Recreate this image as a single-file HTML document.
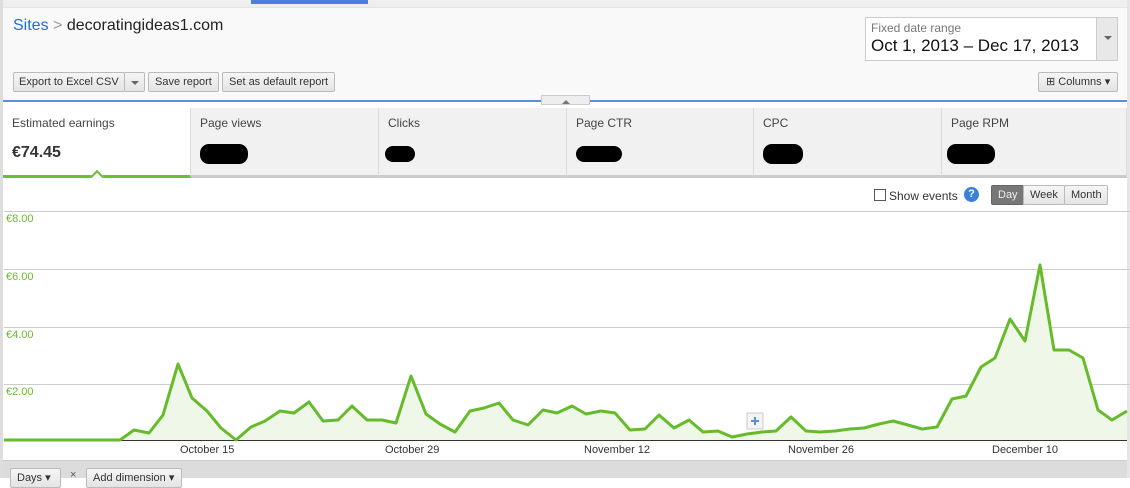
<!DOCTYPE html>
<html><head><style>
*{margin:0;padding:0;box-sizing:border-box}
body{width:1130px;height:478px;overflow:hidden;background:#fff;font-family:"Liberation Sans",Arial,sans-serif;position:relative;color:#222}
.abs{position:absolute}
.btn{position:absolute;height:20px;border:1px solid #bbb;border-radius:2px;background:linear-gradient(#f6f6f6,#e4e4e4);font-size:11px;line-height:18px;padding:0 6px;color:#333;white-space:nowrap;overflow:hidden}
.tab{position:absolute;top:108px;height:70px;width:187px;background:#f1f1f1;border-right:1px solid #ddd;border-bottom:3px solid #ccc}
.tab .t{position:absolute;left:9px;top:8px;font-size:12px;color:#444}
.blob{position:absolute;top:36px;left:9px;height:20px;background:#000;border-radius:9px}
.gl{position:absolute;left:4px;right:0;height:1px;background:#ccc}
.yl{position:absolute;left:6px;font-size:11px;color:#6aba2c}
.xl{position:absolute;top:444px;font-size:11px;color:#333}
</style></head><body>
<div class="abs" style="left:0;top:0;width:1130px;height:7px;background:#efefef"></div>
<div class="abs" style="left:251px;top:0;width:117px;height:4px;background:#4a7fe0"></div>
<div class="abs" style="left:3px;top:7px;width:1124px;height:94px;background:#f9f9f9;border-top:1px solid #e5e5e5"></div>
<div class="abs" style="left:0;top:0;width:3px;height:478px;background:#ddd"></div>
<div class="abs" style="left:1127px;top:0;width:3px;height:478px;background:#e6e6e6"></div>
<div class="abs" style="left:13px;top:17px;font-size:16px;color:#222"><span style="color:#1d6ee0">Sites</span> <span style="color:#999">&gt;</span> decoratingideas1.com</div>
<div class="btn" style="left:13px;top:72px;width:112px;padding:0 5px">Export to Excel CSV</div>
<div class="btn" style="left:124px;top:72px;width:21px;padding:0"><span style="position:absolute;left:6px;top:8px;border:4px solid transparent;border-top:4px solid #666"></span></div>
<div class="btn" style="left:148px;top:72px">Save report</div>
<div class="btn" style="left:222px;top:72px">Set as default report</div>
<div class="abs" style="left:865px;top:17px;width:253px;height:44px;background:#fff;border:1px solid #ccc"></div>
<div class="abs" style="left:1096px;top:18px;width:21px;height:42px;background:#e8e8e8;border-left:1px solid #ccc"><span style="position:absolute;left:7px;top:18px;border:4px solid transparent;border-top:4px solid #666"></span></div>
<div class="abs" style="left:871px;top:21px;font-size:12px;color:#777">Fixed date range</div>
<div class="abs" style="left:871px;top:36px;font-size:17px;color:#111">Oct 1, 2013 – Dec 17, 2013</div>
<div class="btn" style="left:1038px;top:72px;width:80px;padding-left:7px">⊞ Columns ▾</div>
<div class="abs" style="left:3px;top:100px;width:1124px;height:2px;background:#5b8ee0"></div>
<div class="abs" style="left:541px;top:95px;width:49px;height:10px;background:#eee;border:1px solid #ccc"><span style="position:absolute;left:20px;top:0;border:4px solid transparent;border-bottom:4px solid #777"></span></div>
<div class="tab" style="left:3px;width:188px;background:#fff;border-bottom:3px solid #6cbf32"><div class="t">Estimated earnings</div><div style="position:absolute;left:9px;top:36px;font-size:16px;font-weight:bold;color:#333">€74.45</div></div>
<div class="abs" style="left:92px;top:172px;width:10px;height:10px;background:#fff;border-left:2px solid #6cbf32;border-top:2px solid #6cbf32;transform:rotate(45deg)"></div>
<div class="tab" style="left:191px;width:188px"><div class="t">Page views</div><div class="blob" style="width:48px"></div></div>
<div class="tab" style="left:379px;width:188px"><div class="t">Clicks</div><div class="blob" style="left:6px;width:30px;height:16px;top:38px"></div></div>
<div class="tab" style="left:567px;width:187px"><div class="t">Page CTR</div><div class="blob" style="width:46px;height:16px;top:38px"></div></div>
<div class="tab" style="left:754px;width:188px"><div class="t">CPC</div><div class="blob" style="width:40px"></div></div>
<div class="tab" style="left:942px;width:185px"><div class="t">Page RPM</div><div class="blob" style="left:5px;width:48px"></div></div>
<div class="abs" style="left:874px;top:189px;width:12px;height:12px;border:1px solid #555;background:#fff"></div>
<div class="abs" style="left:889px;top:189px;font-size:12px;color:#333">Show events</div>
<div class="abs" style="left:964px;top:187px;width:15px;height:15px;border-radius:50%;background:#3a7fd8;color:#fff;font-size:11px;text-align:center;line-height:15px;font-weight:bold">?</div>
<div class="btn" style="left:991px;top:185px;width:33px;background:#777;color:#eee;border-color:#666">Day</div>
<div class="btn" style="left:1023px;top:185px;width:42px">Week</div>
<div class="btn" style="left:1064px;top:185px;width:44px">Month</div>
<div class="gl" style="top:211px"></div>
<div class="gl" style="top:269px"></div>
<div class="gl" style="top:327px"></div>
<div class="gl" style="top:384px"></div>
<div class="yl" style="top:213px">€8.00</div>
<div class="yl" style="top:271px">€6.00</div>
<div class="yl" style="top:329px">€4.00</div>
<div class="yl" style="top:386px">€2.00</div>
<svg class="abs" style="left:0;top:0" width="1130" height="478">
<polygon fill="#eff7e9" points="4,440 120,440 134,430 149,433 163,415 178,364 192,398 207,411 221,428 236,440 251,427 265,421 280,411 294,413 309,402 323,421 338,420 352,406 367,420 382,420 396,423 411,376 426,414 440,424 455,432 470,411 484,408 499,403 513,420 528,425 543,410 557,413 572,406 586,414 601,411 615,413 630,430 645,429 659,415 674,428 689,420 703,432 718,431 732,437 747,434 762,432 776,431 791,417 806,431 820,432 835,431 850,429 864,428 879,424 893,421 908,425 922,429 937,427 952,399 966,396 981,367 995,358 1010,319 1025,341 1040,265 1054,350 1069,350 1083,358 1098,410 1112,420 1127,411 1127,440"/>
<line x1="4" y1="440.5" x2="1127" y2="440.5" stroke="#333" stroke-width="1"/>
<polyline fill="none" stroke="#66bb2a" stroke-width="3" stroke-linejoin="round" points="4,440 120,440 134,430 149,433 163,415 178,364 192,398 207,411 221,428 236,440 251,427 265,421 280,411 294,413 309,402 323,421 338,420 352,406 367,420 382,420 396,423 411,376 426,414 440,424 455,432 470,411 484,408 499,403 513,420 528,425 543,410 557,413 572,406 586,414 601,411 615,413 630,430 645,429 659,415 674,428 689,420 703,432 718,431 732,437 747,434 762,432 776,431 791,417 806,431 820,432 835,431 850,429 864,428 879,424 893,421 908,425 922,429 937,427 952,399 966,396 981,367 995,358 1010,319 1025,341 1040,265 1054,350 1069,350 1083,358 1098,410 1112,420 1127,411"/>
<rect x="747" y="413" width="16" height="16" fill="#f4f4f4" stroke="#ccc"/>
<path d="M755 417v8M751 421h8" stroke="#5a8fd0" stroke-width="2"/>
</svg>
<div class="xl" style="left:180px">October 15</div>
<div class="xl" style="left:385px">October 29</div>
<div class="xl" style="left:584px">November 12</div>
<div class="xl" style="left:788px">November 26</div>
<div class="xl" style="left:992px">December 10</div>
<div class="abs" style="left:3px;top:460px;width:1124px;height:18px;background:#dcdcdc;border-top:1px solid #ccc"></div>
<div class="btn" style="left:10px;top:468px;width:51px">Days ▾</div>
<div class="abs" style="left:70px;top:469px;font-size:11px;color:#555">×</div>
<div class="btn" style="left:86px;top:468px;width:96px">Add dimension ▾</div>
</body></html>
